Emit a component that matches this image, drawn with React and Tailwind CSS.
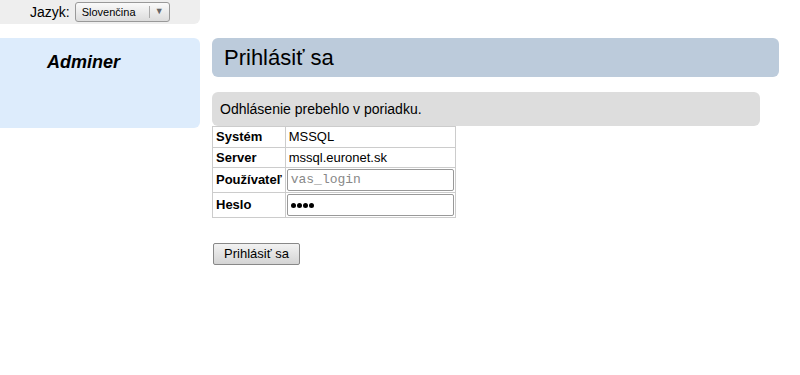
export default function App() {
  return (
    <div className="min-h-[375px] w-[800px] bg-white text-black" style={{ fontFamily: '"Liberation Sans", Arial, sans-serif' }}>
      {/* language bar */}
      <div className="flex h-[24px] w-[200px] items-center rounded-br-md bg-[#eeeeee] pl-[30px]">
        <span className="text-[14px] leading-none">Jazyk:</span>
        <div className="ml-[5px] flex h-[20px] w-[95px] items-center rounded-[3px] border border-[#999] bg-gradient-to-b from-[#fafafa] to-[#dcdcdc] text-[11px]">
          <span className="flex-1 pl-[6px]">Slovenčina</span>
          <span className="h-[12px] w-px bg-[#aaa]" />
          <span className="w-[19px] text-center text-[9px] text-[#666]">▼</span>
        </div>
      </div>

      <div className="mt-[14px] flex">
        {/* sidebar */}
        <div className="h-[90px] w-[200px] shrink-0 rounded-r-md bg-[#ddecfc] pt-[13px] pl-[47px]">
          <h1 className="text-[18px] font-bold italic leading-[22px]">Adminer</h1>
        </div>

        {/* content */}
        <div className="ml-[12px]">
          <h2 className="flex h-[39px] w-[567px] items-center rounded-md bg-[#bccbdb] px-[12px] text-[22px]">Prihlásiť sa</h2>
          <div className="mt-[15px] flex h-[34px] w-[548px] items-center rounded-md bg-[#dddddd] px-[8px] text-[14px]">
            Odhlásenie prebehlo v poriadku.
          </div>
          <table className="w-[244px] border-collapse border border-[#999] text-[13px]">
            <tbody>
              <tr className="h-[20px]">
                <th className="w-[72px] border border-[#ccc] px-[3px] py-0 text-left font-bold">Systém</th>
                <td className="border border-[#ccc] px-[3px] py-0">MSSQL</td>
              </tr>
              <tr className="h-[20px]">
                <th className="border border-[#ccc] px-[3px] py-0 text-left font-bold">Server</th>
                <td className="border border-[#ccc] px-[3px] py-0">mssql.euronet.sk</td>
              </tr>
              <tr className="h-[25px]">
                <th className="border border-[#ccc] px-[3px] py-0 text-left font-bold">Používateľ</th>
                <td className="border border-[#ccc] px-[1px] py-0">
                  <div className="flex h-[22px] w-[167px] items-center rounded-[2px] border border-[#999] px-[3px] text-[13px] text-[#888]" style={{ fontFamily: '"Liberation Mono", "Courier New", monospace' }}>
                    vas_login
                  </div>
                </td>
              </tr>
              <tr className="h-[25px]">
                <th className="border border-[#ccc] px-[3px] py-0 text-left font-bold">Heslo</th>
                <td className="border border-[#ccc] px-[1px] py-0">
                  <div className="flex h-[22px] w-[167px] items-center gap-[1px] rounded-[2px] border border-[#999] px-[3px]">
                    <span className="h-[5px] w-[5px] rounded-full bg-black" />
                    <span className="h-[5px] w-[5px] rounded-full bg-black" />
                    <span className="h-[5px] w-[5px] rounded-full bg-black" />
                    <span className="h-[5px] w-[5px] rounded-full bg-black" />
                  </div>
                </td>
              </tr>
            </tbody>
          </table>
          <button className="mt-[25px] ml-px flex h-[22px] w-[87px] items-center justify-center rounded-[2px] border border-[#888] bg-gradient-to-b from-[#f2f2f2] to-[#d4d4d4] text-[13px]">
            Prihlásiť sa
          </button>
        </div>
      </div>
    </div>
  );
}
